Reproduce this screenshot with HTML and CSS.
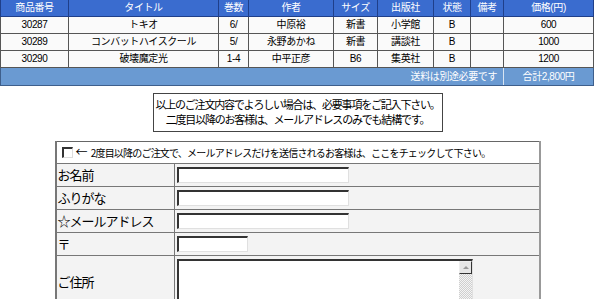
FILE: index.html
```html
<!DOCTYPE html>
<html lang="ja">
<head>
<meta charset="utf-8">
<link rel="stylesheet" href="styles.css">
</head>
<body>
<table class="cart">
  <colgroup>
    <col class="c1"><col class="c2"><col class="c3"><col class="c4"><col class="c5"><col class="c6"><col class="c7"><col class="c8"><col class="c9">
  </colgroup>
  <tr class="head">
    <th>商品番号</th><th>タイトル</th><th>巻数</th><th>作者</th><th>サイズ</th><th>出版社</th><th>状態</th><th>備考</th><th>価格(円)</th>
  </tr>
  <tr>
    <td>30287</td><td>トキオ</td><td>6/</td><td>中原裕</td><td>新書</td><td>小学館</td><td>B</td><td></td><td>600</td>
  </tr>
  <tr>
    <td>30289</td><td>コンバットハイスクール</td><td>5/</td><td>永野あかね</td><td>新書</td><td>講談社</td><td>B</td><td></td><td>1000</td>
  </tr>
  <tr>
    <td>30290</td><td>破壊魔定光</td><td>1-4</td><td>中平正彦</td><td>B6</td><td>集英社</td><td>B</td><td></td><td>1200</td>
  </tr>
  <tr class="foot">
    <td colspan="8" class="ship">送料は別途必要です</td><td class="total">合計2,800円</td>
  </tr>
</table>

<div class="notice-wrap">
  <div class="notice">以上のご注文内容でよろしい場合は、必要事項をご記入下さい。<br>二度目以降のお客様は、メールアドレスのみでも結構です。</div>
</div>

<table class="form">
  <tr class="check-row">
    <td colspan="2"><span class="cb"></span><span class="arrow">←</span>2度目以降のご注文で、メールアドレスだけを送信されるお客様は、ここをチェックして下さい。</td>
  </tr>
  <tr>
    <td class="lbl">お名前</td><td class="fld"><input class="txt" type="text"></td>
  </tr>
  <tr>
    <td class="lbl">ふりがな</td><td class="fld"><input class="txt" type="text"></td>
  </tr>
  <tr>
    <td class="lbl">☆メールアドレス</td><td class="fld"><input class="txt" type="text"></td>
  </tr>
  <tr>
    <td class="lbl">〒</td><td class="fld"><input class="txt zip" type="text"></td>
  </tr>
  <tr class="addr">
    <td class="lbl">ご住所</td><td class="fld"><div class="area"><span class="sb"><span class="sb-btn"></span></span></div></td>
  </tr>
</table>
</body>
</html>
```
FILE: styles.css
```css
html, body {
  margin: 0;
  padding: 0;
  background: #fff;
  font-family: "Liberation Sans", "Noto Sans CJK JP", sans-serif;
  color: #000;
}

.cart {
  border-collapse: collapse;
  width: 593px;
  table-layout: fixed;
  font-size: 10px;
  letter-spacing: -0.4px;
}
.c1 { width: 68px; }
.c2 { width: 150px; }
.c3 { width: 30px; }
.c4 { width: 85px; }
.c5 { width: 44px; }
.c6 { width: 56px; }
.c7 { width: 37px; }
.c8 { width: 33px; }
.c9 { width: 90px; }

.cart th, .cart td {
  height: 16px;
  padding: 0;
  text-align: center;
  line-height: 16px;
  white-space: nowrap;
  overflow: hidden;
}
.cart th {
  background: #3a6ccf;
  color: #fff;
  font-weight: normal;
  border: 1px solid #1f3f8a;
  border-top: none;
}
.cart td {
  background: #fafafa;
  border: 1px solid #555;
}
.cart .foot td {
  background: #6a9ad2;
  color: #fff;
  border: 1px solid #3e5f8c;
  height: 17px;
}
.cart .foot .ship {
  text-align: right;
  padding-right: 6px;
  border-right: 1px solid #d8e4f2;
}

.notice-wrap {
  display: flex;
  justify-content: center;
  margin-top: 7px;
}
.notice {
  width: 288px;
  border: 1px solid #444;
  text-align: center;
  font-size: 11px;
  letter-spacing: -1.2px;
  line-height: 15px;
  padding: 3px 0 4px;
  white-space: nowrap;
  font-family: "Noto Sans CJK JP", sans-serif;
}

.form {
  margin: 9px auto 0;
  width: 486px;
  border-collapse: collapse;
  border-left: 2px solid #777;
  border-right: 2px solid #999;
  border-top: 1px solid #666;
  font-family: "Noto Sans CJK JP", sans-serif;
}
.form td {
  padding: 0;
  border-bottom: 1px solid #777;
}
.check-row td {
  background: #fff;
  height: 21px;
  line-height: 14px;
  font-size: 10px;
  letter-spacing: -0.8px;
  padding-left: 5px;
  white-space: nowrap;
}
.cb {
  display: inline-block;
  width: 8px;
  height: 8px;
  border-top: 2px solid #333;
  border-left: 2px solid #333;
  border-right: 1px solid #ddd;
  border-bottom: 1px solid #ddd;
  background: #fff;
  vertical-align: -1px;
  margin-right: 3px;
}
.arrow {
  font-size: 12px;
  margin-right: 4px;
}
.lbl {
  width: 116px;
  height: 22px;
  background: #f3f3f3;
  border-right: 1px solid #777;
  font-size: 13px;
  letter-spacing: -1px;
  padding-left: 1px !important;
  line-height: 16px;
}
.fld {
  background: #f3f3f3;
  padding-left: 2px !important;
  line-height: 16px;
}
.txt {
  display: block;
  box-sizing: border-box;
  width: 172px;
  height: 16px;
  margin: 0;
  padding: 0;
  border-top: 2px solid #333;
  border-left: 2px solid #333;
  border-right: 1px solid #e0e0e0;
  border-bottom: 1px solid #e0e0e0;
  background: #fff;
}
.zip { width: 71px; }
.addr .lbl { height: 52px; }
.addr .fld { vertical-align: top; padding-top: 3px !important; }
.area {
  display: flex;
  justify-content: flex-end;
  box-sizing: border-box;
  width: 296px;
  height: 48px;
  border-top: 2px solid #333;
  border-left: 2px solid #333;
  border-right: 1px solid #e0e0e0;
  border-bottom: 1px solid #e0e0e0;
  background: #fff;
}
.sb {
  width: 13px;
  background: repeating-conic-gradient(#cfcfcf 0 25%, #f4f4f4 0 50%) 0 0 / 2px 2px;
  display: flex;
  flex-direction: column;
}
.sb-btn {
  height: 13px;
  box-sizing: border-box;
  background: #e6e6e6;
  border: 1px solid #333;
  border-top-color: #eee;
  border-left-color: #eee;
  position: relative;
}
.sb-btn::after {
  content: "";
  position: absolute;
  left: 3px;
  top: 4px;
  border-left: 3px solid transparent;
  border-right: 3px solid transparent;
  border-bottom: 3px solid #999;
}
```
